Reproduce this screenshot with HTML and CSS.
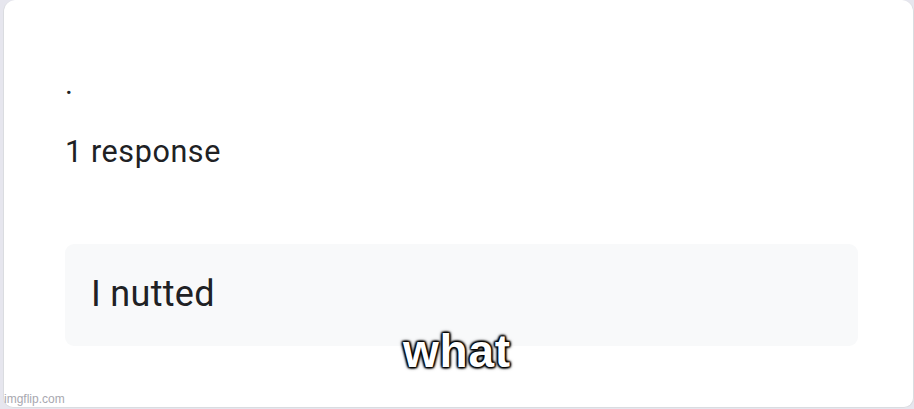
FILE: index.html
```html
<!DOCTYPE html>
<html>
<head>
<meta charset="utf-8">
<link rel="stylesheet" href="styles.css">
</head>
<body>
<div class="card">
  <div class="title">.</div>
  <div class="count">1 response</div>
  <div class="answer">I nutted</div>
</div>
<div class="caption">what</div>
<div class="watermark">imgflip.com</div>
</body>
</html>
```

FILE: styles.css
```css
html, body {
  margin: 0;
  padding: 0;
}
body {
  width: 914px;
  height: 409px;
  background: #e6e6ee;
  font-family: Roboto, "Noto Sans", sans-serif;
  color: #202124;
  position: relative;
  overflow: hidden;
}
.card {
  box-sizing: border-box;
  margin-left: 3px;
  width: 911px;
  height: 408px;
  background: #fff;
  border: 1px solid #dadce0;
  border-top: none;
  border-radius: 12px 12px 10px 10px;
  padding: 66px 55px 0 61px;
  display: flex;
  flex-direction: column;
}
.title {
  font-size: 30px;
  line-height: 36px;
  height: 36px;
}
.count {
  margin-top: 32px;
  font-size: 30.5px;
  line-height: 36px;
  letter-spacing: 0.6px;
}
.answer {
  margin-top: 74px;
  background: #f8f9fa;
  border-radius: 9px;
  height: 102px;
  box-sizing: border-box;
  padding: 30px 26px;
  font-size: 36px;
  line-height: 40px;
  letter-spacing: 0.3px;
}
.caption {
  position: absolute;
  left: 0;
  width: 914px;
  top: 326px;
  text-align: center;
  font-family: "Liberation Sans", Arial, sans-serif;
  font-weight: bold;
  font-size: 46px;
  line-height: 50px;
  color: #fff;
  letter-spacing: 0.8px;
  text-shadow: 0 0 2px #000, 0 0 3px #000, 0 0 4px #000, 1px 1px 2px #000, -1px -1px 2px #000, 1px -1px 2px #000, -1px 1px 2px #000;
}
.watermark {
  position: absolute;
  left: 4px;
  top: 391px;
  font-family: "Liberation Sans", Arial, sans-serif;
  font-size: 12px;
  line-height: 16px;
  color: #a8a8b0;
  text-shadow: 0 0 2px #fff;
}
```
